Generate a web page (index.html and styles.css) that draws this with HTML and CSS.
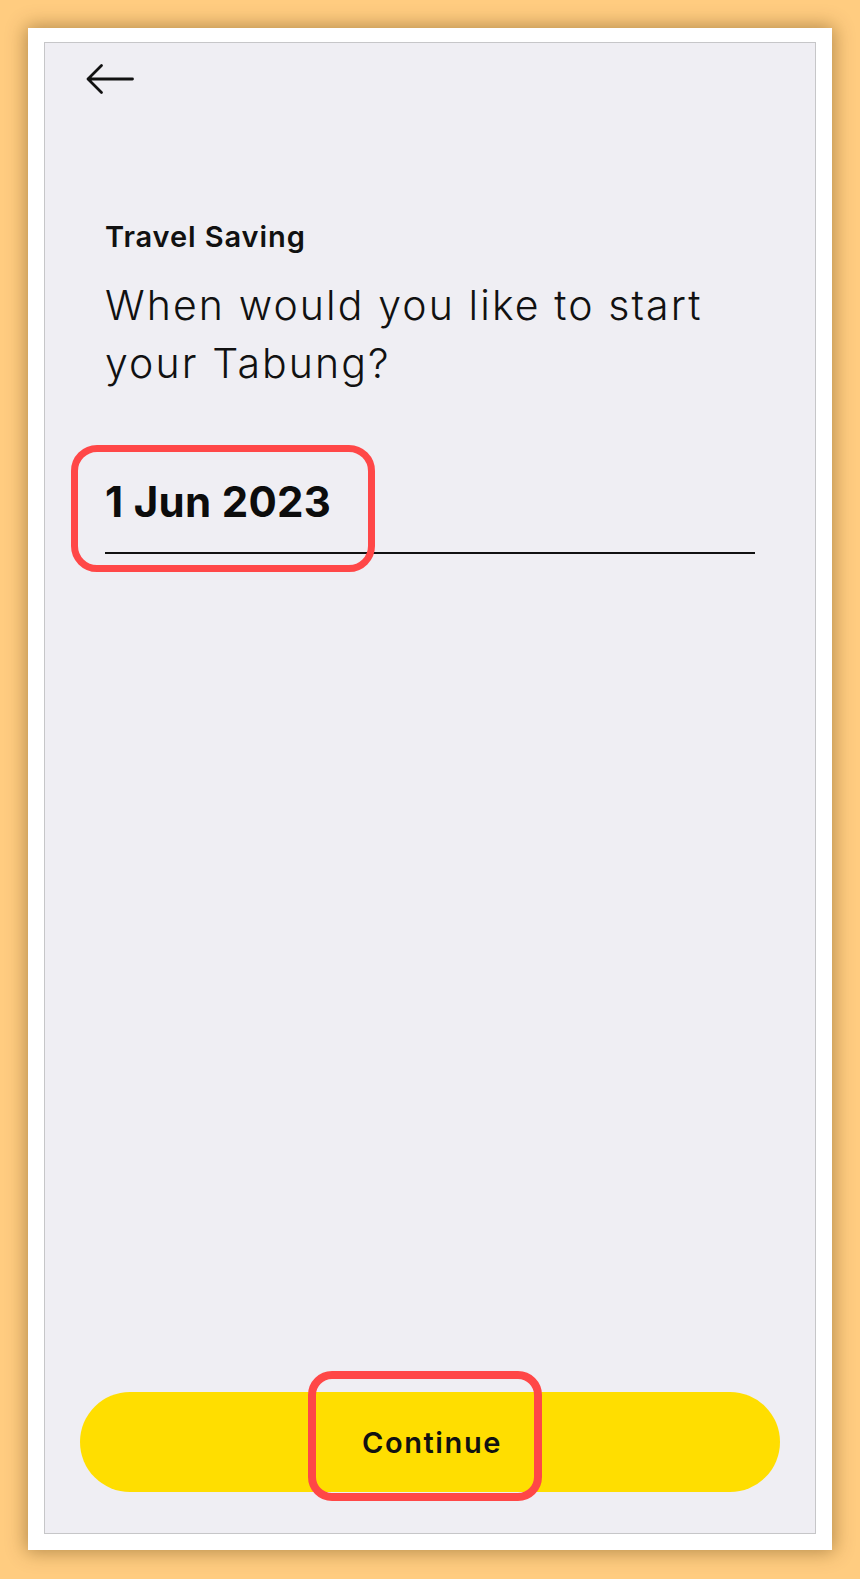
FILE: index.html
```html
<!DOCTYPE html>
<html lang="en">
<head>
<meta charset="utf-8">
<title>Travel Saving</title>
<link rel="stylesheet" href="styles.css">
</head>
<body>
<div class="frame">
  <div class="screen">
    <header class="topbar">
      <button class="back" aria-label="Back">
        <svg class="back-icon" viewBox="0 0 48 32" width="48" height="32">
          <path d="M2 16 H46.5 M15.5 2.5 L2 16 L15.5 29.5" fill="none" stroke="#111" stroke-width="2.8" stroke-linecap="round" stroke-linejoin="round"/>
        </svg>
      </button>
    </header>
    <main class="content">
      <p class="eyebrow">Travel Saving</p>
      <h1 class="question">When would you like to start your Tabung?</h1>
      <div class="date-field">
        <span class="date-value">1 Jun 2023</span>
        <span class="annot annot-date"></span>
      </div>
    </main>
    <footer class="footer">
      <button class="continue">Continue<span class="annot annot-btn"></span></button>
    </footer>
  </div>
</div>
</body>
</html>
```
FILE: styles.css
```css
* { box-sizing: border-box; }
html, body { margin: 0; padding: 0; }
body {
  background: #FFCC80;
  font-family: Inter, "Liberation Sans", sans-serif;
  color: #111;
  padding: 28px;
  height: 1579px;
}
.frame {
  width: 804px;
  height: 1522px;
  background: #fff;
  padding: 14px 16px 16px 16px;
  box-shadow: 0 0 18px 2px rgba(90, 60, 10, 0.45);
}
.screen {
  height: 100%;
  background: #EFEEF3;
  border: 1px solid #c6c6c8;
  display: flex;
  flex-direction: column;
}
.topbar {
  padding: 20px 0 0 41px;
  height: 53px;
}
.back {
  border: 0;
  background: none;
  padding: 0;
  display: block;
  cursor: pointer;
}
.back-icon { display: block; }
.content {
  padding: 123px 60px 0 60px;
}
.eyebrow {
  margin: 0;
  font-size: 29px;
  font-weight: 600;
  line-height: 36px;
  letter-spacing: 0.9px;
  color: #111;
}
.question {
  margin: 21px 0 0 0;
  font-size: 41px;
  font-weight: 300;
  line-height: 58px;
  letter-spacing: 2.1px;
  color: #111;
  max-width: 640px;
}
.date-field {
  position: relative;
  margin-top: 84px;
  border-bottom: 2px solid #111;
  padding-bottom: 24px;
}
.date-value {
  display: block;
  font-size: 42px;
  font-weight: 700;
  line-height: 52px;
  letter-spacing: 0.3px;
  color: #0c0c0c;
}
.annot {
  position: absolute;
  border: 7px solid #FF4747;
  border-radius: 26px;
  pointer-events: none;
}
.annot-date {
  left: -34px;
  top: -31px;
  width: 304px;
  height: 127px;
}
.footer {
  margin-top: auto;
  padding: 0 35px 41px 35px;
}
.continue {
  position: relative;
  width: 100%;
  height: 100px;
  border: 0;
  border-radius: 50px;
  background: #FFDE00;
  font-family: Inter, "Liberation Sans", sans-serif;
  font-size: 29px;
  font-weight: 600;
  letter-spacing: 1.6px;
  color: #111;
  padding: 0 0 0 4px;
}
.annot-btn {
  left: 228px;
  top: -21px;
  width: 234px;
  height: 130px;
  border-width: 8px;
  border-radius: 24px;
}
```
